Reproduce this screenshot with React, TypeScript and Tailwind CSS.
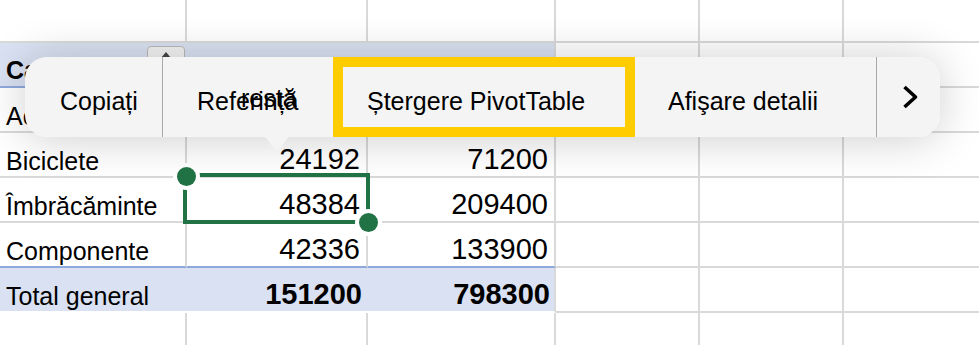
import React from 'react'

const cols = ['w-[187px]', 'w-[181px]', 'w-[188px]', 'w-[144px]', 'w-[144px]', 'w-[144px]']

const rows = [
  { label: 'Accesorii', a: '36288', b: '383800' },
  { label: 'Biciclete', a: '24192', b: '71200' },
  { label: 'Îmbrăcăminte', a: '48384', b: '209400' },
  { label: 'Componente', a: '42336', b: '133900', last: true },
]

function EmptyCells({ from }: { from: number }) {
  return (
    <>
      {cols.slice(from).map((w, i) => (
        <div key={i} className={`${w} h-full shrink-0 border-r-2 border-b-2 border-[#d9d9d9]`} />
      ))}
    </>
  )
}

function Sheet() {
  return (
    <div className="flex flex-col font-['Liberation_Sans',Arial,sans-serif] text-black">
      <div className="flex h-[43px]">
        <EmptyCells from={0} />
      </div>

      <div className="flex h-[45px]">
        <div className="w-[187px] shrink-0 h-full flex items-start bg-[#d9e1f2] border-b-2 border-b-[#8ea9db] border-r-2 border-r-[#d9e1f2]">
          <span className="pl-[6px] pt-[15px] text-[25px] leading-none font-bold">Categorii</span>
          <div className="ml-auto mt-[3px] w-[38px] h-[36px] rounded-[4px] border border-[#b9b9b9] bg-[#f2f2f2] flex justify-center">
            <svg width="12" height="10" viewBox="0 0 12 10" className="mt-[4px]">
              <path d="M6 1 L11 7 L1 7 Z" fill="#444" />
            </svg>
          </div>
        </div>
        <div className="w-[181px] shrink-0 h-full flex items-start bg-[#d9e1f2] border-b-2 border-b-[#8ea9db] border-r-2 border-r-[#d9e1f2]">
          <span className="pl-[10px] pt-[15px] text-[25px] leading-none font-bold whitespace-nowrap">Sumă de Cant</span>
        </div>
        <div className="w-[188px] shrink-0 h-full flex items-start bg-[#d9e1f2] border-b-2 border-b-[#8ea9db] border-r-2 border-r-[#d9d9d9]">
          <span className="pl-[10px] pt-[15px] text-[25px] leading-none font-bold whitespace-nowrap">Sumă de Vânz</span>
        </div>
        <EmptyCells from={3} />
      </div>

      {rows.map((r) => (
        <div key={r.label} className="flex h-[45px]">
          <div className={`w-[187px] shrink-0 h-full flex items-end pb-[2px] pl-[6px] border-r-2 border-r-[#d9d9d9] border-b-2 ${r.last ? 'border-b-[#8ea9db]' : 'border-b-[#d9d9d9]'}`}>
            <span className="text-[25px] leading-none">{r.label}</span>
          </div>
          <div className={`w-[181px] shrink-0 h-full flex items-end justify-end pb-[2px] pr-[6px] border-r-2 border-r-[#d9d9d9] border-b-2 ${r.last ? 'border-b-[#8ea9db]' : 'border-b-[#d9d9d9]'}`}>
            <span className="text-[29px] leading-none">{r.a}</span>
          </div>
          <div className={`w-[188px] shrink-0 h-full flex items-end justify-end pb-[2px] pr-[6px] border-r-2 border-r-[#d9d9d9] border-b-2 ${r.last ? 'border-b-[#8ea9db]' : 'border-b-[#d9d9d9]'}`}>
            <span className="text-[29px] leading-none">{r.b}</span>
          </div>
          <EmptyCells from={3} />
        </div>
      ))}

      <div className="flex h-[45px]">
        <div className="w-[556px] shrink-0 h-full flex items-end bg-[#d9e1f2] border-b-2 border-b-white border-r-2 border-r-[#d9d9d9]">
          <span className="w-[187px] pl-[6px] pb-[2px] text-[25px] leading-none">Total general</span>
          <span className="w-[181px] pr-[6px] pb-[2px] text-right text-[29px] leading-none font-bold">151200</span>
          <span className="w-[186px] pr-[4px] pb-[2px] text-right text-[29px] leading-none font-bold">798300</span>
        </div>
        <EmptyCells from={3} />
      </div>

      <div className="flex h-[45px]">
        <EmptyCells from={0} />
      </div>
    </div>
  )
}

function Selection() {
  return (
    <>
      <div className="absolute left-[183px] top-[173px] w-[187px] h-[51px] border-4 border-[#217346]" />
      <div className="absolute left-[177px] top-[167px] w-[19px] h-[19px] rounded-full bg-[#217346] shadow-[0_0_0_4px_white]" />
      <div className="absolute left-[359px] top-[213px] w-[19px] h-[19px] rounded-full bg-[#217346] shadow-[0_0_0_4px_white]" />
    </>
  )
}

function Separator() {
  return <div className="w-px h-full bg-[#a9a9a9] shrink-0" />
}

function Popover() {
  return (
    <div className="absolute left-[25px] top-[57px] w-[915px] h-[80px] font-['Liberation_Sans',Arial,sans-serif] text-[25px] leading-none text-black">
      <div className="absolute inset-0 rounded-[22px] shadow-[0_2px_46px_rgba(0,0,0,0.2)]" />
      <svg className="absolute left-[235px] top-[78px]" width="34" height="17" viewBox="0 0 34 17">
        <path d="M0 0 C 8 0, 12 15, 17 15 C 22 15, 26 0, 34 0 Z" fill="#f4f4f4" />
      </svg>
      <div className="relative h-full flex rounded-[22px] bg-[#f4f4f4] overflow-hidden">
        <div className="w-[137px] shrink-0 flex items-center pl-[35px] pt-[8px]">Copiați</div>
        <Separator />
        <div className="w-[170px] shrink-0 flex items-center pl-[34px] pt-[8px]">
          <span className="relative">
            Referință
            <span className="absolute left-[44px] top-[-3px]">restă</span>
          </span>
        </div>
        <div className="w-[302px] shrink-0 border-[10px] border-[#ffcc00] flex items-center pl-[24px] pt-[8px]">
          Ștergere PivotTable
        </div>
        <div className="w-[241px] shrink-0 flex items-center pl-[33px] pt-[8px]">Afişare detalii</div>
        <Separator />
        <div className="flex-1 flex items-center justify-center pl-[3px]">
          <svg width="18" height="26" viewBox="0 0 18 26">
            <path d="M3.5 3 L14.5 13 L3.5 23" fill="none" stroke="#000" strokeWidth="3.6" strokeLinejoin="round" />
          </svg>
        </div>
      </div>
    </div>
  )
}

export default function App() {
  return (
    <div className="relative w-[979px] h-[345px] overflow-hidden bg-white">
      <Sheet />
      <Selection />
      <Popover />
    </div>
  )
}
